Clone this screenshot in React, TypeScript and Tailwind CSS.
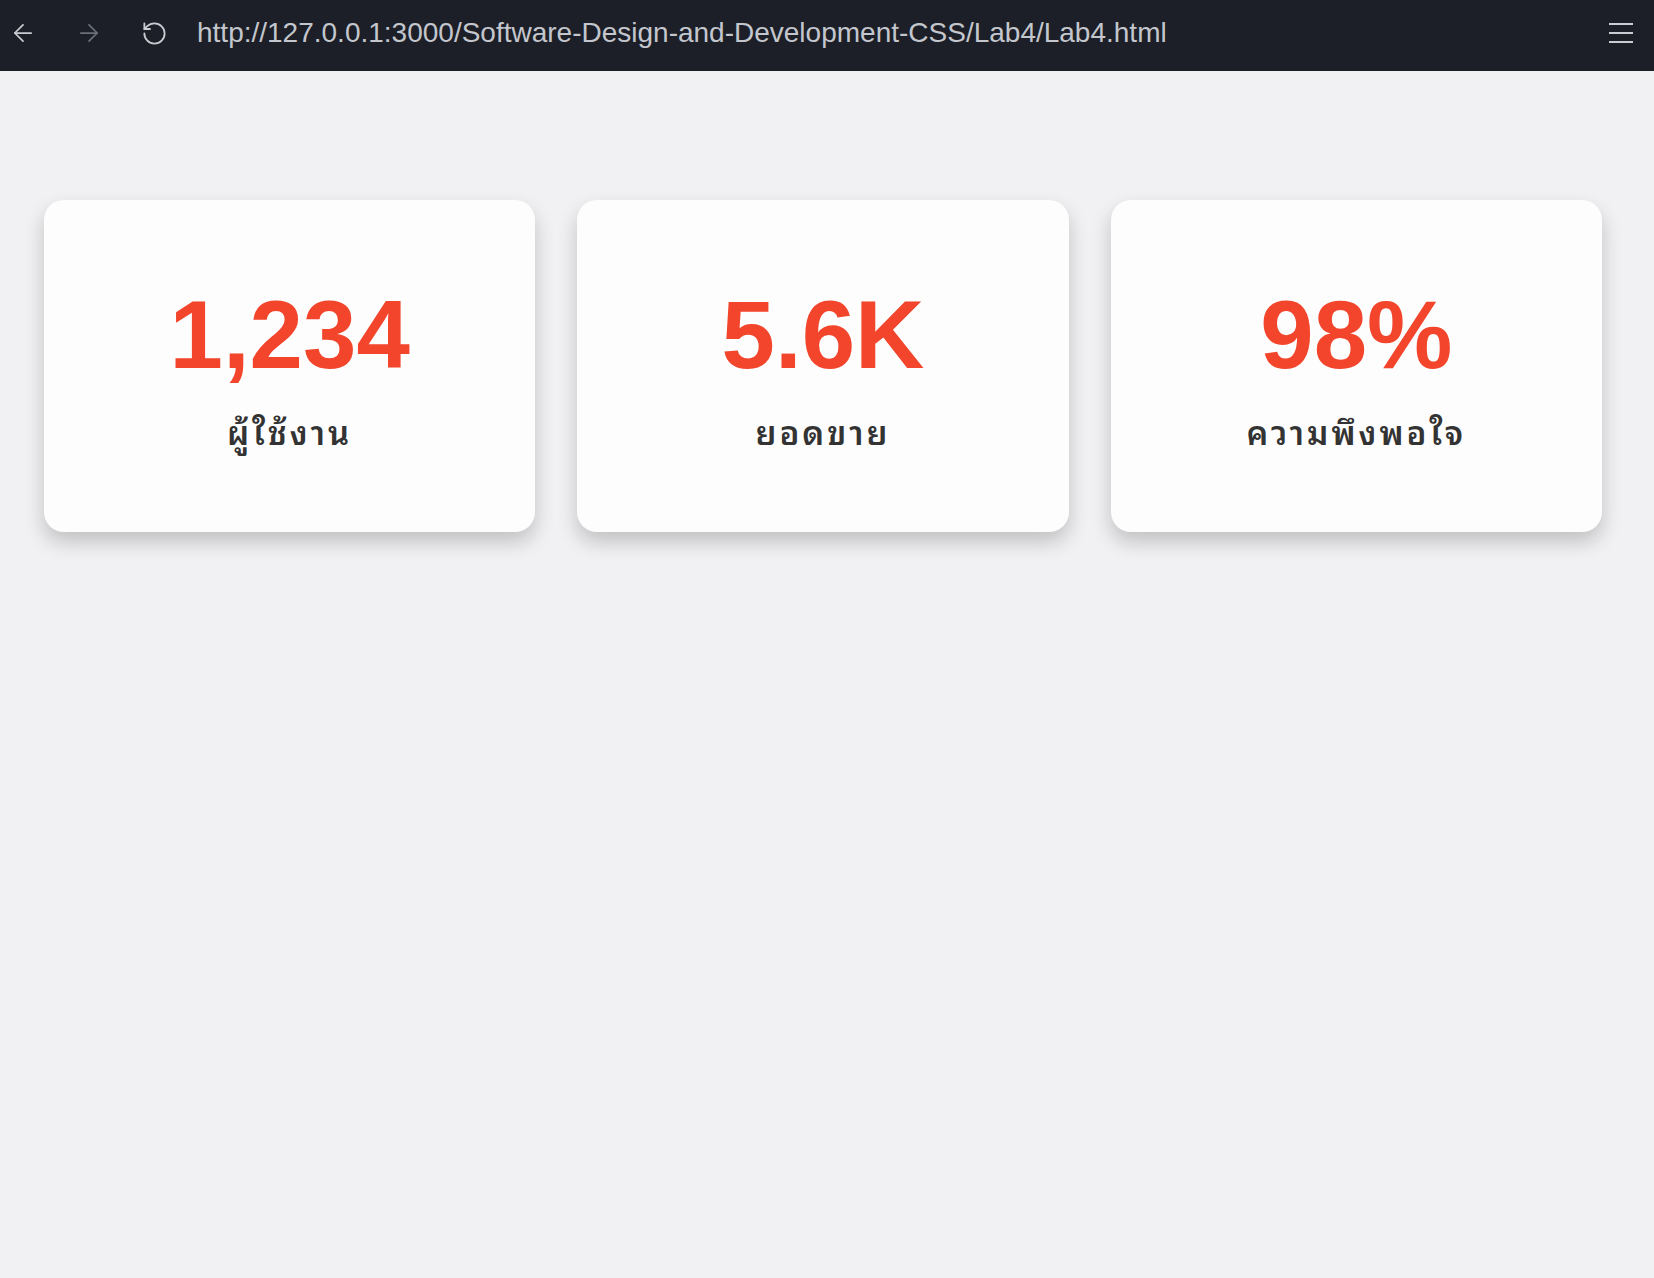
import { ArrowLeft, ArrowRight, RotateCw } from "lucide-react";

const stats = [
  { value: "1,234", label: "ผู้ใช้งาน" },
  { value: "5.6K", label: "ยอดขาย" },
  { value: "98%", label: "ความพึงพอใจ" },
];

function BrowserBar() {
  return (
    <div className="h-[71px] bg-[#1c1f27] flex items-center pb-[5px]">
      <div className="w-[46px] flex justify-center">
        <ArrowLeft className="w-[28px] h-[28px] text-[#c9ccd3]" strokeWidth={1.5} />
      </div>
      <div className="w-[86px] flex justify-center">
        <ArrowRight className="w-[28px] h-[28px] text-[#6b6f78]" strokeWidth={1.5} />
      </div>
      <div className="w-[44px] flex justify-center">
        <RotateCw className="w-[27px] h-[27px] text-[#c9ccd3] -scale-x-100" strokeWidth={1.6} />
      </div>
      <div className="ml-[21px] flex-1 text-[28px] text-[#c3c6cd] font-['Liberation_Sans',Arial,sans-serif]">
        http://127.0.0.1:3000/Software-Design-and-Development-CSS/Lab4/Lab4.html
      </div>
      <div className="mr-[21px] flex flex-col gap-[7px]">
        <span className="block w-[24px] h-[2px] bg-[#c9ccd3]" />
        <span className="block w-[24px] h-[2px] bg-[#c9ccd3]" />
        <span className="block w-[24px] h-[2px] bg-[#c9ccd3]" />
      </div>
    </div>
  );
}

function StatCard({ value, label }: { value: string; label: string }) {
  return (
    <div className="h-[332px] rounded-[20px] bg-[#fdfdfd] shadow-[0_10px_20px_rgba(0,0,0,0.2)] flex flex-col items-center pt-[80px]">
      <div className="text-[96px] leading-[110px] font-bold text-[#f2452c] font-['Liberation_Sans',Arial,sans-serif]">
        {value}
      </div>
      <div className="mt-[16px] text-[33px] font-semibold tracking-[3px] text-[#333333] font-['Thonburi','Noto_Sans_Thai_Looped','Loma','Garuda','Noto_Sans_Thai','Noto_Sans',sans-serif]">
        {label}
      </div>
    </div>
  );
}

export default function App() {
  return (
    <div className="min-h-[1278px] bg-[#f1f1f3]">
      <BrowserBar />
      <div className="grid grid-cols-3 gap-[42px] pl-[44px] pr-[52px] pt-[129px]">
        {stats.map((s) => (
          <StatCard key={s.value} value={s.value} label={s.label} />
        ))}
      </div>
    </div>
  );
}
